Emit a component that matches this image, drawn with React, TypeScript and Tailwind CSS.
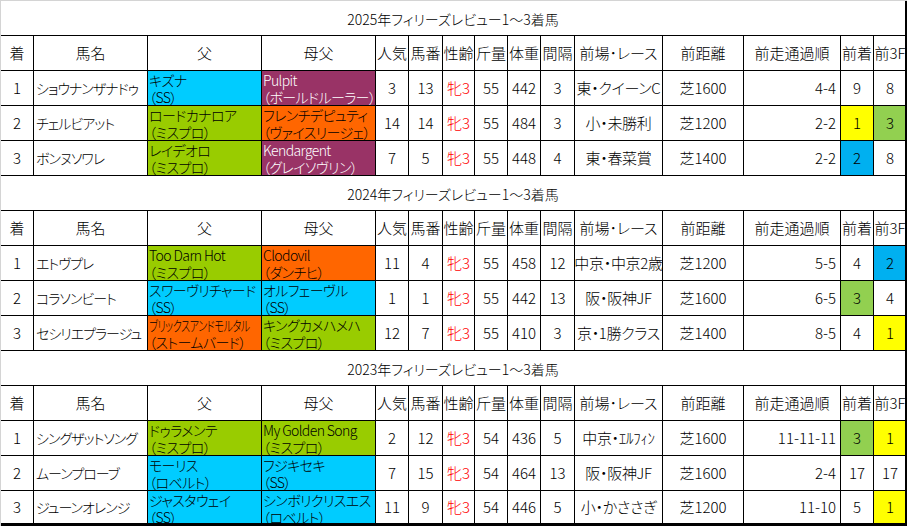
import React from "react";
import clsx from "clsx";

type Ped = { name: string; sub: string; bg: string; white?: boolean; squeeze?: boolean };
type Row = {
  rank: string;
  horse: string;
  sire: Ped;
  dam: Ped;
  pop: string;
  num: string;
  kg: string;
  body: string;
  gap: string;
  race: string;
  dist: string;
  pass: string;
  prev: string;
  prevBg?: string;
  f3: string;
  f3Bg?: string;
};

const CYAN = "bg-[#00ccff]";
const GREEN = "bg-[#99cc00]";
const PURPLE = "bg-[#993366]";
const ORANGE = "bg-[#ff6600]";
const YELLOW = "bg-[#ffff00]";
const LGREEN = "bg-[#92d050]";
const BLUE = "bg-[#00b0f0]";

const sections: { title: string; rows: Row[] }[] = [
  {
    title: "2025年フィリーズレビュー1～3着馬",
    rows: [
      {
        rank: "1", horse: "ショウナンザナドゥ",
        sire: { name: "キズナ", sub: "（SS）", bg: CYAN },
        dam: { name: "Pulpit", sub: "（ボールドルーラー）", bg: PURPLE, white: true },
        pop: "3", num: "13", kg: "55", body: "442", gap: "3", race: "東・クイーンC", dist: "芝1600", pass: "4-4", prev: "9", f3: "8",
      },
      {
        rank: "2", horse: "チェルビアット",
        sire: { name: "ロードカナロア", sub: "（ミスプロ）", bg: GREEN },
        dam: { name: "フレンチデピュティ", sub: "（ヴァイスリージェ）", bg: ORANGE },
        pop: "14", num: "14", kg: "55", body: "484", gap: "3", race: "小・未勝利", dist: "芝1200", pass: "2-2", prev: "1", prevBg: YELLOW, f3: "3", f3Bg: LGREEN,
      },
      {
        rank: "3", horse: "ボンヌソワレ",
        sire: { name: "レイデオロ", sub: "（ミスプロ）", bg: GREEN },
        dam: { name: "Kendargent", sub: "（グレイソヴリン）", bg: PURPLE, white: true },
        pop: "7", num: "5", kg: "55", body: "448", gap: "4", race: "東・春菜賞", dist: "芝1400", pass: "2-2", prev: "2", prevBg: BLUE, f3: "8",
      },
    ],
  },
  {
    title: "2024年フィリーズレビュー1～3着馬",
    rows: [
      {
        rank: "1", horse: "エトヴプレ",
        sire: { name: "Too Darn Hot", sub: "（ミスプロ）", bg: GREEN },
        dam: { name: "Clodovil", sub: "（ダンチヒ）", bg: ORANGE },
        pop: "11", num: "4", kg: "55", body: "458", gap: "12", race: "中京・中京2歳", dist: "芝1200", pass: "5-5", prev: "4", f3: "2", f3Bg: BLUE,
      },
      {
        rank: "2", horse: "コラソンビート",
        sire: { name: "スワーヴリチャード", sub: "（SS）", bg: CYAN },
        dam: { name: "オルフェーヴル", sub: "（SS）", bg: CYAN },
        pop: "1", num: "1", kg: "55", body: "442", gap: "13", race: "阪・阪神JF", dist: "芝1600", pass: "6-5", prev: "3", prevBg: LGREEN, f3: "4",
      },
      {
        rank: "3", horse: "セシリエプラージュ",
        sire: { name: "ブリックスアンドモルタル", sub: "（ストームバード）", bg: ORANGE, squeeze: true },
        dam: { name: "キングカメハメハ", sub: "（ミスプロ）", bg: GREEN },
        pop: "12", num: "7", kg: "55", body: "410", gap: "3", race: "京・1勝クラス", dist: "芝1400", pass: "8-5", prev: "4", f3: "1", f3Bg: YELLOW,
      },
    ],
  },
  {
    title: "2023年フィリーズレビュー1～3着馬",
    rows: [
      {
        rank: "1", horse: "シングザットソング",
        sire: { name: "ドゥラメンテ", sub: "（ミスプロ）", bg: GREEN },
        dam: { name: "My Golden Song", sub: "（ミスプロ）", bg: GREEN },
        pop: "2", num: "12", kg: "54", body: "436", gap: "5", race: "中京・ｴﾙﾌｨﾝ", dist: "芝1600", pass: "11-11-11", prev: "3", prevBg: LGREEN, f3: "1", f3Bg: YELLOW,
      },
      {
        rank: "2", horse: "ムーンプローブ",
        sire: { name: "モーリス", sub: "（ロベルト）", bg: CYAN },
        dam: { name: "フジキセキ", sub: "（SS）", bg: CYAN },
        pop: "7", num: "15", kg: "54", body: "464", gap: "13", race: "阪・阪神JF", dist: "芝1600", pass: "2-4", prev: "17", f3: "17",
      },
      {
        rank: "3", horse: "ジューンオレンジ",
        sire: { name: "ジャスタウェイ", sub: "（SS）", bg: CYAN },
        dam: { name: "シンボリクリスエス", sub: "（ロベルト）", bg: CYAN },
        pop: "11", num: "9", kg: "54", body: "446", gap: "5", race: "小・かささぎ", dist: "芝1200", pass: "11-10", prev: "5", f3: "1", f3Bg: YELLOW,
      },
    ],
  },
];

const headers = ["着", "馬名", "父", "母父", "人気", "馬番", "性齢", "斤量", "体重", "間隔", "前場･レース", "前距離", "前走通過順", "前着", "前3F"];

function Cell(props: { children?: React.ReactNode; extra?: string; last?: boolean }) {
  return (
    <div
      className={clsx(
        "h-[35px] border-black border-r flex items-center overflow-hidden whitespace-nowrap",
        props.last ? "border-b-[3px]" : "border-b",
        props.extra ?? "justify-center"
      )}
    >
      {props.children}
    </div>
  );
}

function PedCell({ p, last }: { p: Ped; last?: boolean }) {
  return (
    <div
      className={clsx(
        "h-[35px] border-black border-r flex flex-col pl-[1px] pt-[1px] text-[14px] leading-[17px] tracking-[-0.6px] overflow-hidden whitespace-nowrap",
        last ? "border-b-[3px]" : "border-b",
        p.bg,
        p.white ? "text-white" : "text-black"
      )}
    >
      {p.squeeze ? (
        <span className="inline-block origin-left scale-x-[0.72]">{p.name}</span>
      ) : (
        <span>{p.name}</span>
      )}
      <span>{p.sub}</span>
    </div>
  );
}

export default function App() {
  return (
    <div className="w-[907px] h-[526px] overflow-hidden bg-white border-t border-l border-[#d4d4d4] font-['Noto_Sans_CJK_JP',sans-serif] font-light [font-feature-settings:'palt'] text-black text-[15px]">
      <div className="h-full overflow-hidden border-r-2 border-black">
        <div className="grid w-max grid-cols-[33px_114px_114px_114px_33px_34px_32px_33px_33px_34px_88px_81px_97px_33px_33px]">
          {sections.map((sec, si) => (
            <React.Fragment key={sec.title}>
              <div className="col-span-full h-[35px] border-b border-black flex items-center justify-center pt-[3px] pr-[2px] text-[14px]">
                {sec.title}
              </div>
              {headers.map((h) => (
                <Cell key={si + h}>{h}</Cell>
              ))}
              {sec.rows.map((r, ri) => {
                const last = si === sections.length - 1 && ri === sec.rows.length - 1;
                return (
                  <React.Fragment key={si + "-" + ri}>
                    <Cell last={last}>{r.rank}</Cell>
                    <Cell last={last} extra="justify-start pl-[2px] text-[14px] tracking-[-1px]">{r.horse}</Cell>
                    <PedCell p={r.sire} last={last} />
                    <PedCell p={r.dam} last={last} />
                    <Cell last={last}>{r.pop}</Cell>
                    <Cell last={last}>{r.num}</Cell>
                    <Cell last={last} extra="justify-center text-[#ff0000]">牝3</Cell>
                    <Cell last={last}>{r.kg}</Cell>
                    <Cell last={last}>{r.body}</Cell>
                    <Cell last={last}>{r.gap}</Cell>
                    <Cell last={last} extra="justify-center tracking-[-0.3px]">{r.race}</Cell>
                    <Cell last={last}>{r.dist}</Cell>
                    <Cell last={last} extra="justify-end pr-[4px]">{r.pass}</Cell>
                    <Cell last={last} extra={clsx("justify-center", r.prevBg)}>{r.prev}</Cell>
                    <Cell last={last} extra={clsx("justify-center", r.f3Bg)}>{r.f3}</Cell>
                  </React.Fragment>
                );
              })}
            </React.Fragment>
          ))}
        </div>
      </div>
    </div>
  );
}
